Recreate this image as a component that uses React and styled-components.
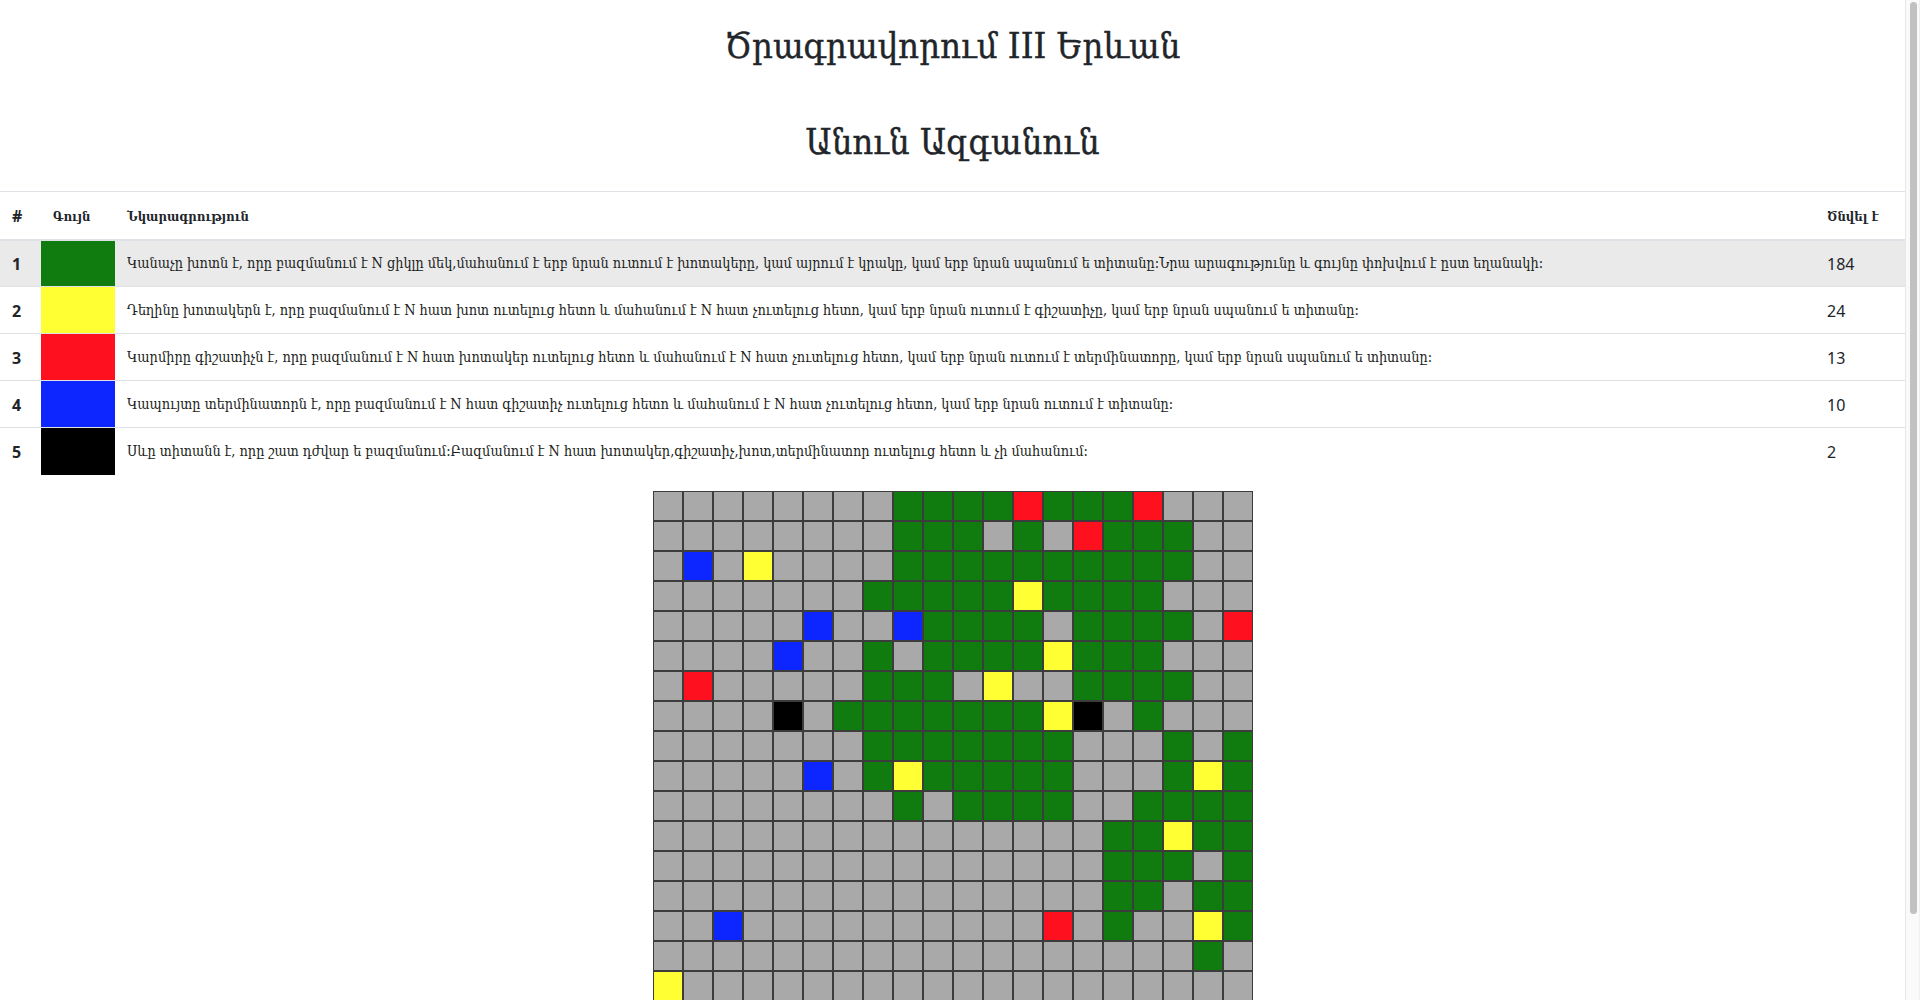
import React from "react";
import styled, { createGlobalStyle } from "styled-components";

const serif = '"DejaVu Serif Condensed", "DejaVu Serif", serif';

const GlobalStyle = createGlobalStyle`
  body {
    margin: 0;
    background: #fff;
    color: #212529;
    font-family: "Noto Sans", sans-serif;
    font-size: 16px;
    line-height: 1.5;
  }
`;

const Page = styled.div`
  display: flex;
  flex-direction: column;
  padding-right: 15px;
`;

const ScrollTrack = styled.div`
  position: fixed;
  top: 0;
  right: 0;
  bottom: 0;
  width: 15px;
  box-sizing: border-box;
  padding: 2px 2px 0 4px;
  background: #fafafa;
  border-left: 1px solid #e8e8e8;
  border-right: 1px solid #f0f0f0;
`;

const ScrollThumb = styled.div`
  height: 912px;
  background: #c1c1c1;
  border-radius: 4px;
`;

const Heading = styled.h1`
  margin: 0 0 8px;
  padding-top: ${(props) => props.$top}px;
  font-family: ${serif};
  font-size: 36px;
  font-weight: 400;
  line-height: 48px;
  text-align: center;
  -webkit-text-stroke: 0.4px #212529;
`;

const Table = styled.table`
  width: 100%;
  table-layout: fixed;
  border-collapse: collapse;
  margin-top: 17px;
  margin-bottom: 16px;
`;

const HeadCell = styled.th`
  padding: 2px 12px 0;
  height: 48px;
  box-sizing: border-box;
  width: ${(props) => (props.$width ? `${props.$width}px` : "auto")};
  border-top: 1px solid #dee2e6;
  border-bottom: 2px solid #dee2e6;
  font-family: ${(props) => (props.$digits ? '"Noto Sans", sans-serif' : serif)};
  font-size: ${(props) => (props.$digits ? 16 : 13)}px;
  font-weight: 700;
  text-align: left;
  white-space: nowrap;
`;

const Row = styled.tr`
  background: ${(props) => (props.$active ? "#eaeaeb" : "#fff")};
`;

const NumberCell = styled.td`
  padding: 2px 12px 0;
  height: 47px;
  box-sizing: border-box;
  border-top: 1px solid #dee2e6;
  font-family: "Noto Sans", sans-serif;
  font-size: 16px;
  font-weight: ${(props) => (props.$bold ? 700 : 400)};
`;

const TextCell = styled.td`
  padding: 2px 12px 0;
  border-top: 1px solid #dee2e6;
  font-family: ${serif};
  font-size: 14.35px;
  color: #1a1d20;
  white-space: nowrap;
`;

const Swatch = styled.td`
  padding: 0;
  border-top: 1px solid #dee2e6;
  background: ${(props) => props.$color};
`;

const Board = styled.div`
  display: grid;
  grid-template-columns: repeat(20, 30px);
  grid-auto-rows: 30px;
  width: 600px;
  margin: 0 auto;
`;

const Square = styled.div`
  box-sizing: border-box;
  border: 1px solid #3c3c3c;
  background: ${(props) => props.$color};
`;

const colors = {
  ".": "#a9a9a9",
  g: "#107c10",
  y: "#ffff33",
  r: "#ff101e",
  b: "#0d26ff",
  k: "#000000",
};

const rows = [
  { id: 1, color: colors.g, count: 184, active: true, text: "Կանաչը խոտն է, որը բազմանում է N ցիկլը մեկ,մահանում է երբ նրան ուտում է խոտակերը, կամ այրում է կրակը, կամ երբ նրան սպանում ե տիտանը:Նրա արագությունը և գույնը փոխվում է ըստ եղանակի:" },
  { id: 2, color: colors.y, count: 24, text: "Դեղինը խոտակերն է, որը բազմանում է N հատ խոտ ուտելուց հետո և մահանում է N հատ չուտելուց հետո, կամ երբ նրան ուտում է գիշատիչը, կամ երբ նրան սպանում ե տիտանը:" },
  { id: 3, color: colors.r, count: 13, text: "Կարմիրը գիշատիչն է, որը բազմանում է N հատ խոտակեր ուտելուց հետո և մահանում է N հատ չուտելուց հետո, կամ երբ նրան ուտում է տերմինատորը, կամ երբ նրան սպանում ե տիտանը:" },
  { id: 4, color: colors.b, count: 10, text: "Կապույտը տերմինատորն է, որը բազմանում է N հատ գիշատիչ ուտելուց հետո և մահանում է N հատ չուտելուց հետո, կամ երբ նրան ուտում է տիտանը:" },
  { id: 5, color: colors.k, count: 2, text: "Սևը տիտանն է, որը շատ դժվար ե բազմանում:Բազմանում է N հատ խոտակեր,գիշատիչ,խոտ,տերմինատոր ուտելուց հետո և չի մահանում:" },
];

const board = [
  "........ggggrgggr...",
  "........ggg.g.rggg..",
  ".b.y....gggggggggg..",
  ".......gggggygggg...",
  ".....b..bgggg.gggg.r",
  "....b..g.ggggyggg...",
  ".r.....ggg.y..gggg..",
  "....k.gggggggyk.g...",
  ".......ggggggg...g.g",
  ".....b.gyggggg...gyg",
  "........g.gggg..gggg",
  "...............ggygg",
  "...............ggg.g",
  "...............gg.gg",
  "..b..........r.g..yg",
  "..................g.",
  "y...................",
  "....................",
  "....................",
  "....................",
];

export default function App() {
  return (
    <Page>
      <GlobalStyle />
      <ScrollTrack>
        <ScrollThumb />
      </ScrollTrack>
      <Heading $top={22}>Ծրագրավորում III Երևան</Heading>
      <Heading $top={40}>Անուն Ազգանուն</Heading>
      <Table>
        <thead>
          <tr>
            <HeadCell $digits $width={41}>#</HeadCell>
            <HeadCell $width={74}>Գույն</HeadCell>
            <HeadCell>Նկարագրություն</HeadCell>
            <HeadCell $width={90}>Ծնվել է</HeadCell>
          </tr>
        </thead>
        <tbody>
          {rows.map((row) => (
            <Row key={row.id} $active={row.active}>
              <NumberCell $bold>{row.id}</NumberCell>
              <Swatch $color={row.color} />
              <TextCell>{row.text}</TextCell>
              <NumberCell>{row.count}</NumberCell>
            </Row>
          ))}
        </tbody>
      </Table>
      <Board>
        {board.join("").split("").map((c, i) => (
          <Square key={i} $color={colors[c]} />
        ))}
      </Board>
    </Page>
  );
}
